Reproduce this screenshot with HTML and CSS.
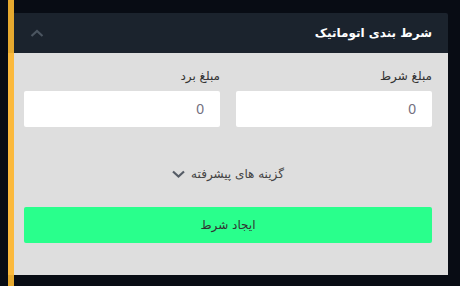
FILE: index.html
```html
<!DOCTYPE html>
<html lang="fa" dir="rtl">
<head>
<meta charset="UTF-8">
<meta name="viewport" content="width=device-width, initial-scale=1.0">
<title>شرط بندی اتوماتیک</title>
<link rel="stylesheet" href="styles.css">
</head>
<body>
    <div class="panel">
        <div class="panel-head">
            <h3 class="title">شرط بندی اتوماتیک</h3>
            <svg class="toggle" width="14" height="8" viewBox="0 0 14 8">
                <path d="M1.5 7 L7 2 L12.5 7" fill="none" stroke="#4b5560" stroke-width="2.2"/>
            </svg>
        </div>
        <div class="panel-body">
            <div class="fields">
                <div class="field">
                    <label for="stake" class="label">مبلغ شرط</label>
                    <input type="text" id="stake" class="amount" value="0">
                </div>
                <div class="field">
                    <label for="win" class="label">مبلغ برد</label>
                    <input type="text" id="win" class="amount" value="0">
                </div>
            </div>
            <div class="advanced">
                <span>گزینه های پیشرفته</span>
                <svg width="13" height="8" viewBox="0 0 13 8">
                    <path d="M1 1.5 L6.5 6.5 L12 1.5" fill="none" stroke="#555c66" stroke-width="2.2"/>
                </svg>
            </div>
            <button class="create">ایجاد شرط</button>
        </div>
    </div>
</body>
</html>
```

FILE: styles.css
```css
html, body {
    margin: 0;
    height: 100%;
}
body {
    background-color: #080c14;
    padding: 13px 12px 0 8px;
    box-sizing: border-box;
    font-family: "DejaVu Sans", "Noto Sans", sans-serif;
    direction: rtl;
    position: relative;
}
body::before {
    content: "";
    position: absolute;
    left: 8px;
    top: 0;
    bottom: 0;
    width: 6px;
    background: linear-gradient(#e6a92f 0, #e6a92f 53px, #fbb93c 53px, #fbb93c 275px, #e6a92f 275px);
}
.panel {
    width: 440px;
}
.panel-head {
    background-color: #1b232d;
    height: 40px;
    display: flex;
    align-items: center;
    justify-content: space-between;
    padding: 0 16px;
    border-top-right-radius: 2px;
}
.title {
    margin: 0;
    color: #ffffff;
    font-size: 12px;
    font-weight: bold;
}
.toggle {
    margin-left: 6px;
}
.panel-body {
    background-color: #dedede;
    padding: 16px 16px 32px 16px;
}
.fields {
    display: flex;
    gap: 16px;
}
.field {
    flex: 1;
    min-width: 0;
    display: flex;
    flex-direction: column;
}
.label {
    color: #333333;
    font-size: 12px;
    margin-bottom: 8px;
}
.amount {
    width: 100%;
    min-width: 0;
    height: 36px;
    border: none;
    border-radius: 2px;
    background-color: #ffffff;
    padding: 0 16px;
    font-family: "Liberation Sans", sans-serif;
    font-size: 14px;
    color: #74717f;
    text-align: right;
    direction: ltr;
    box-sizing: border-box;
    outline: none;
}
.advanced {
    display: flex;
    justify-content: center;
    align-items: center;
    gap: 6px;
    margin: 40px 0 26px;
    color: #444444;
    font-size: 12px;
}
.create {
    width: 100%;
    height: 36px;
    border: none;
    border-radius: 2px;
    background-color: #29ff8c;
    color: #333333;
    font-family: "DejaVu Sans", sans-serif;
    font-size: 12px;
}
```
